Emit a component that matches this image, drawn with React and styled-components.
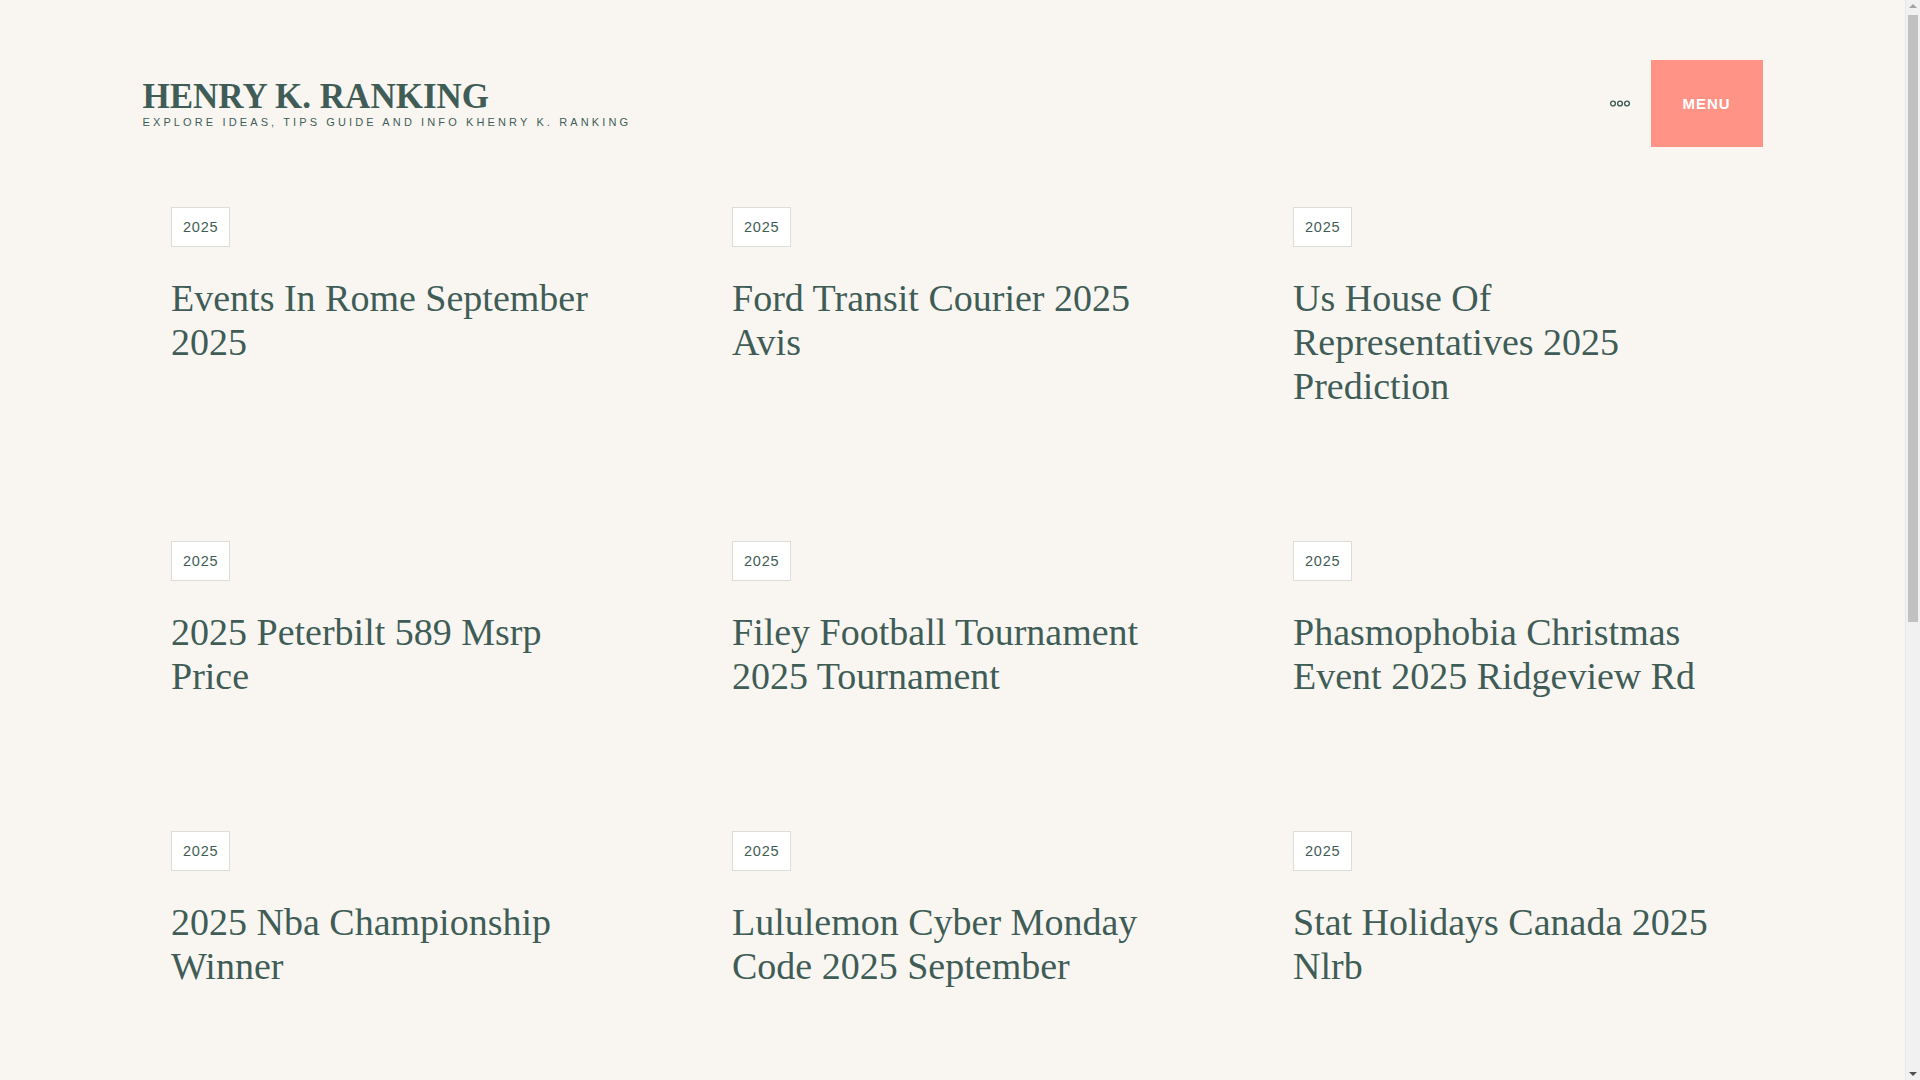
import React from 'react';
import styled, { createGlobalStyle } from 'styled-components';

const GlobalStyle = createGlobalStyle`
  html, body {
    margin: 0;
    padding: 0;
    background: #f9f6f2;
  }
  body {
    min-height: 1870px;
    font-family: "Liberation Sans", Arial, sans-serif;
    color: #3f5d56;
  }
  #root {
    margin-right: 15px;
  }
`;

/* stand-in for the browser's classic scrollbar seen in the screenshot */
const ScrollTrack = styled.div`
  position: fixed;
  top: 0;
  right: 0;
  width: 15px;
  height: 100vh;
  background: #f1f1f1;
  border-left: 1px solid #e8e8e8;
  box-sizing: border-box;
`;

const ScrollThumb = styled.div`
  position: absolute;
  top: 15px;
  left: 2px;
  right: 2px;
  height: 607px;
  background: #c1c1c1;
`;

const ScrollArrow = styled.div`
  position: absolute;
  left: 3px;
  width: 0;
  height: 0;
  border-left: 4px solid transparent;
  border-right: 4px solid transparent;
  ${(p) =>
    p.$down
      ? 'bottom: 4px; border-top: 4px solid #505050;'
      : 'top: 4px; border-bottom: 4px solid #a3a3a3;'}
`;

const Header = styled.header`
  max-width: 1620px;
  margin: 0 auto;
  padding-top: 60px;
  display: flex;
  align-items: center;
  justify-content: space-between;
`;

const Brand = styled.div`
  display: flex;
  flex-direction: column;
`;

const SiteTitle = styled.a`
  font-family: "Liberation Serif", "Times New Roman", serif;
  font-weight: 700;
  font-size: 35px;
  line-height: 1;
  color: #3f5d56;
  text-decoration: none;
`;

const Tagline = styled.p`
  margin: 3px 0 0;
  font-size: 11px;
  line-height: 1;
  letter-spacing: 3.12px;
  text-transform: uppercase;
  color: #3f5d56;
`;

const Actions = styled.div`
  display: flex;
  align-items: center;
  gap: 21px;
`;

const MoreButton = styled.button`
  border: 0;
  background: none;
  padding: 0;
  display: flex;
  align-items: center;
  cursor: pointer;
`;

const MenuButton = styled.button`
  width: 112px;
  height: 87px;
  border: 0;
  background: #ff9385;
  color: #fff;
  font-family: "Liberation Sans", Arial, sans-serif;
  font-weight: 700;
  font-size: 15px;
  letter-spacing: 1px;
  cursor: pointer;
`;

const Grid = styled.main`
  max-width: 1683px;
  margin: 0 auto;
  padding-top: 60px;
  display: grid;
  grid-template-columns: repeat(3, 1fr);
`;

const Card = styled.article`
  padding: 0 60px 132px;
`;

const Tag = styled.a`
  display: inline-block;
  box-sizing: border-box;
  height: 40px;
  padding: 0 11px;
  border: 1px solid #dcdcd9;
  background: #fff;
  font-size: 14.5px;
  line-height: 38px;
  letter-spacing: 0.8px;
  color: #3f5d56;
  text-decoration: none;
`;

const PostTitle = styled.h2`
  margin: 29px 0 1px;
  font-family: "Liberation Serif", "Times New Roman", serif;
  font-weight: 400;
  font-size: 38px;
  line-height: 44px;
  color: #3f5d56;
`;

const posts = [
  'Events In Rome September 2025',
  'Ford Transit Courier 2025 Avis',
  'Us House Of Representatives 2025 Prediction',
  '2025 Peterbilt 589 Msrp Price',
  'Filey Football Tournament 2025 Tournament',
  'Phasmophobia Christmas Event 2025 Ridgeview Rd',
  '2025 Nba Championship Winner',
  'Lululemon Cyber Monday Code 2025 September',
  'Stat Holidays Canada 2025 Nlrb',
];

function Dots() {
  return (
    <svg width="20" height="7" viewBox="0 0 20 7" fill="none" stroke="#3f5d56" strokeWidth="1.4">
      <circle cx="3" cy="3.5" r="2.4" />
      <circle cx="10" cy="3.5" r="2.4" />
      <circle cx="17" cy="3.5" r="2.4" />
    </svg>
  );
}

export default function App() {
  return (
    <>
      <GlobalStyle />
      <Header>
        <Brand>
          <SiteTitle href="#">HENRY K. RANKING</SiteTitle>
          <Tagline>Explore Ideas, Tips Guide and Info Khenry K. Ranking</Tagline>
        </Brand>
        <Actions>
          <MoreButton aria-label="More">
            <Dots />
          </MoreButton>
          <MenuButton>MENU</MenuButton>
        </Actions>
      </Header>
      <Grid>
        {posts.map((title) => (
          <Card key={title}>
            <Tag href="#">2025</Tag>
            <PostTitle>{title}</PostTitle>
          </Card>
        ))}
      </Grid>
      <ScrollTrack>
        <ScrollArrow />
        <ScrollThumb />
        <ScrollArrow $down />
      </ScrollTrack>
    </>
  );
}
